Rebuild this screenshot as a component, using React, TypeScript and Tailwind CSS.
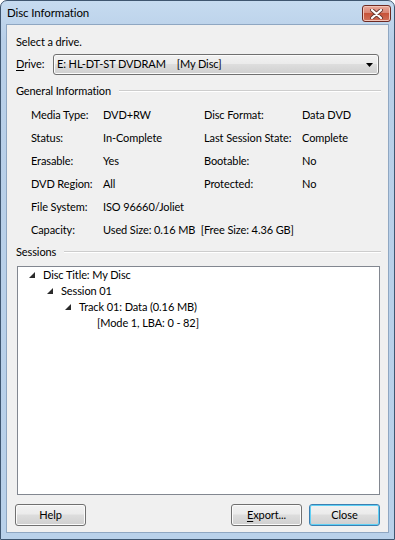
import React from "react";

const btn =
  "h-[22px] w-[71px] rounded-[3px] border border-[#707070] bg-[linear-gradient(#f2f2f2,#ebebeb_45%,#dddddd_50%,#cfcfcf)] shadow-[inset_0_0_0_1px_#fbfbfb] flex items-center justify-center text-black";

function Tri() {
  return (
    <svg width="6" height="6" viewBox="0 0 6 6" className="shrink-0 mr-[8px] -mt-[1px]">
      <polygon points="6,0 6,6 0,6" fill="#2b2b2b" />
    </svg>
  );
}

function Header({ title }: { title: string }) {
  return (
    <div className="flex items-center h-[16px] -mr-[2px]">
      <span>{title}</span>
      <div className="flex-1 ml-[8px] h-[2px] border-t border-[#cdcdcd] border-b-white border-b" />
    </div>
  );
}

const rows: [string, string, string, string][] = [
  ["Media Type:", "DVD+RW", "Disc Format:", "Data DVD"],
  ["Status:", "In-Complete", "Last Session State:", "Complete"],
  ["Erasable:", "Yes", "Bootable:", "No"],
  ["DVD Region:", "All", "Protected:", "No"],
  ["File System:", "ISO 96660/Joliet", "", ""],
  ["Capacity:", "Used Size: 0.16 MB  [Free Size: 4.36 GB]", "", ""],
];

export default function App() {
  return (
    <div
      className="w-[395px] h-[540px] flex flex-col border border-[#3f5670] rounded-t-[7px] bg-[linear-gradient(#c6dbf0,#b8cfe8_40px,#b9d1ea)] px-[5px] pb-[6px] text-[11px] tracking-[-0.1px] text-black"
      style={{ fontFamily: '"Lato", "Liberation Sans", sans-serif' }}
    >
      <div className="h-[23px] flex items-center shrink-0">
        <span className="pl-[1px] text-[11.5px]">Disc Information</span>
        <div className="ml-auto -mr-[2px] mt-[2px] w-[29px] h-[17px] rounded-[3px] border border-[#6e2a22] bg-[linear-gradient(#e9a99b,#d98574_45%,#c75339_50%,#d0705a)] shadow-[inset_0_0_0_1px_#f2c4b8] flex items-center justify-center">
          <svg width="13" height="10" viewBox="0 0 13 10">
            <path d="M2 1 L11 9 M11 1 L2 9" stroke="#6a3a32" strokeWidth="4" strokeLinecap="round" />
            <path d="M2 1 L11 9 M11 1 L2 9" stroke="#ffffff" strokeWidth="2.2" strokeLinecap="round" />
          </svg>
        </div>
      </div>
      <div className="flex-1 flex flex-col bg-[#f0f0f0] border border-[#8fa7c2] pt-[9px] pl-[9px] pr-[9px] pb-[6px]">
        <div className="h-[16px] leading-[16px]">Select a drive.</div>
        <div className="flex items-center mt-[4px] h-[21px]">
          <span className="w-[37px] shrink-0">
            <span className="underline underline-offset-[2px]">D</span>rive:
          </span>
          <div className="flex-1 h-[21px] rounded-[3px] border border-[#707070] bg-[linear-gradient(#f2f2f2,#ebebeb_45%,#dddddd_50%,#cfcfcf)] shadow-[inset_0_0_0_1px_#fbfbfb] flex items-center pl-[3px] pr-[5px]">
            <span className="whitespace-pre">E: HL-DT-ST DVDRAM    [My Disc]</span>
            <svg width="7" height="4" viewBox="0 0 7 4" className="ml-auto">
              <polygon points="0,0 7,0 3.5,4" fill="#000" />
            </svg>
          </div>
        </div>
        <div className="mt-[8px]">
          <Header title="General Information" />
        </div>
        <div className="mt-[5px] pl-[15px] grid grid-cols-[72px_101px_98px_1fr] auto-rows-[23px] items-center">
          {rows.map((r, i) => (
            <React.Fragment key={i}>
              <span>{r[0]}</span>
              <span className={r[2] ? "" : "col-span-3 whitespace-pre"}>{r[1]}</span>
              {r[2] ? <span>{r[2]}</span> : null}
              {r[2] ? <span>{r[3]}</span> : null}
            </React.Fragment>
          ))}
        </div>
        <div className="mt-[2px]">
          <Header title="Sessions" />
        </div>
        <div className="mt-[6px] ml-[1px] w-[363px] h-[229px] border border-[#828790] bg-white flex flex-col">
          <div className="h-[16px] flex items-center pl-[11px]"><Tri />Disc Title: My Disc</div>
          <div className="h-[16px] flex items-center pl-[29px]"><Tri />Session 01</div>
          <div className="h-[16px] flex items-center pl-[47px]"><Tri />Track 01: Data (0.16 MB)</div>
          <div className="h-[16px] flex items-center pl-[79px]">[Mode 1, LBA: 0 - 82]</div>
        </div>
        <div className="mt-[9px] -ml-[1px] -mr-[1px] flex items-center gap-[7px]">
          <div className={btn}>Help</div>
          <div className="flex-1" />
          <div className={btn}>
            <span><span className="underline underline-offset-[2px]">E</span>xport...</span>
          </div>
          <div className="h-[22px] w-[71px] rounded-[3px] border border-[#3c7fb1] bg-[linear-gradient(#f2f2f2,#ebebeb_45%,#dddddd_50%,#cfcfcf)] shadow-[inset_0_0_0_1px_#5fd0f5] flex items-center justify-center">
            Close
          </div>
        </div>
      </div>
    </div>
  );
}
